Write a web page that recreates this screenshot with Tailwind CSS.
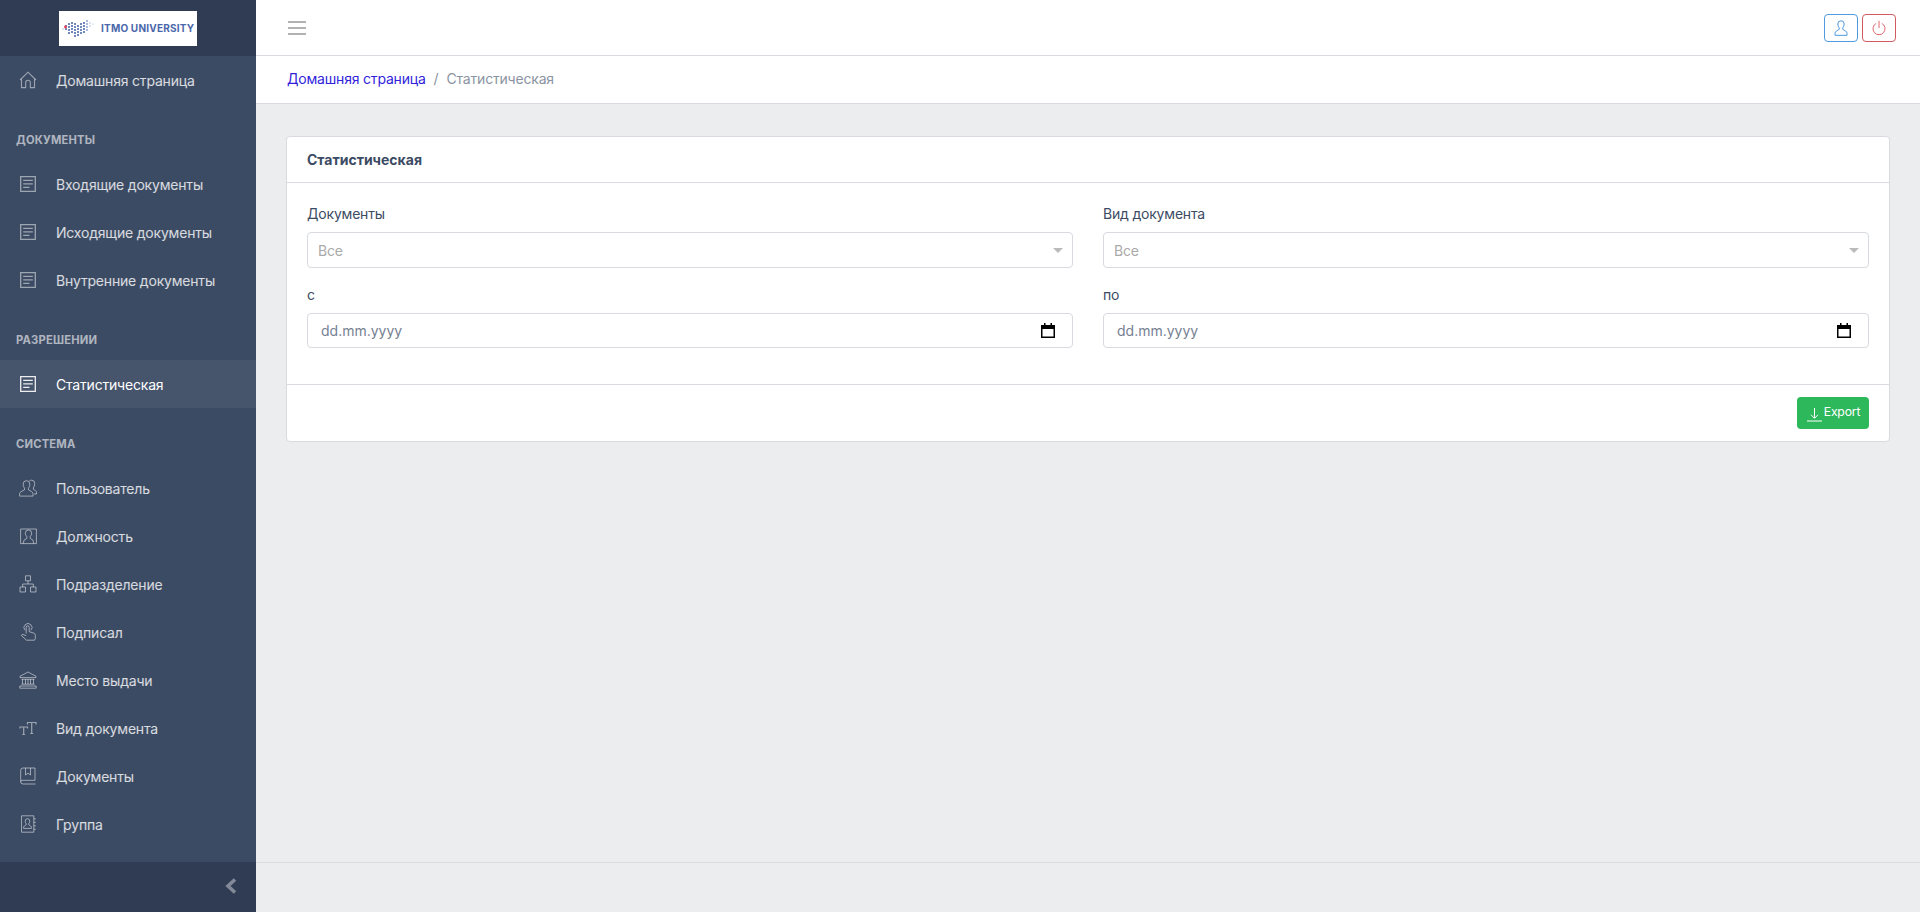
<!DOCTYPE html>
<html lang="ru">
<head>
<meta charset="utf-8">
<title>Статистическая</title>
<script src="https://cdn.jsdelivr.net/npm/@tailwindcss/browser@4"></script>
</head>
<body class="m-0 h-[912px] overflow-hidden bg-[#ebedef] font-[Inter,sans-serif] text-[14px] tracking-[-0.19px] text-[#3c4b64]">
<div class="flex h-[912px]">
  <aside class="flex h-full w-[256px] shrink-0 flex-col bg-[#3c4b64] text-white/80">
    <div class="flex h-[56px] shrink-0 items-center justify-center bg-[#303c54]">
      <div class="flex h-[35px] w-[138px] items-center gap-[5px] bg-white pl-[1px]">
        <svg width="36" height="20" viewBox="0 0 36 20" class="shrink-0">
          <g fill="#3f62a8">
            <circle cx="6" cy="8" r="1"/><circle cx="6" cy="11" r="1"/>
            <circle cx="9" cy="6" r="1"/><circle cx="9" cy="9" r="1"/><circle cx="9" cy="12" r="1"/><circle cx="9" cy="15" r="1"/>
            <circle cx="12" cy="5" r="1"/><circle cx="12" cy="8" r="1"/><circle cx="12" cy="11" r="1"/><circle cx="12" cy="14" r="1"/>
            <circle cx="15" cy="6" r="1"/><circle cx="15" cy="9" r="1"/><circle cx="15" cy="12" r="1"/><circle cx="15" cy="15" r="1"/><circle cx="15" cy="18" r="1"/>
            <circle cx="18" cy="8" r="1"/><circle cx="18" cy="11" r="1"/><circle cx="18" cy="14" r="1"/><circle cx="18" cy="17" r="1"/>
            <circle cx="21" cy="6" r="1"/><circle cx="21" cy="9" r="1"/><circle cx="21" cy="12" r="1"/><circle cx="21" cy="15" r="1"/>
            <circle cx="24" cy="5" r="1"/><circle cx="24" cy="8" r="1"/><circle cx="24" cy="11" r="1"/><circle cx="24" cy="14" r="1"/>
            <circle cx="27" cy="3" r=".8"/><circle cx="27" cy="6" r=".8"/><circle cx="27" cy="9" r=".8"/><circle cx="27" cy="12" r=".8"/>
            <circle cx="30" cy="5" r=".7" fill="#9db8d8"/><circle cx="30" cy="8" r=".7" fill="#9db8d8"/><circle cx="33" cy="6" r=".6" fill="#9db8d8"/>
            <circle cx="3" cy="11" r=".7" fill="#9db8d8"/>
          </g>
          <circle cx="5.500" cy="9" r="1.400" fill="#e8394f"/>
        </svg>
        <span class="whitespace-nowrap text-[10px] leading-none font-bold tracking-[.2px] text-[#4a67ab]">ITMO UNIVERSITY</span>
      </div>
    </div>
    <nav class="flex-1 overflow-hidden">
      <a class="flex h-[48px] items-center"><span class="flex w-[56px] shrink-0 justify-center text-white/50"><svg width="18" height="18" viewBox="0 0 18 18" fill="none" stroke="currentColor" stroke-width="1.100"><path d="M1 9 9 1.200 17 9M2.500 8v8.600h4.200v-5a2.300 2.300 0 0 1 4.600 0v5h4.200V8"/></svg></span>Домашняя страница</a>

      <div class="flex h-[56px] items-center pt-[16px] pl-[16px] text-[11.200px] font-bold tracking-[.2px] uppercase text-white/60">Документы</div>
      <a class="flex h-[48px] items-center"><span class="flex w-[56px] shrink-0 justify-center text-white/50"><svg width="16" height="16" viewBox="0 0 16 16" fill="none" stroke="currentColor" stroke-width="1.300"><path d="M.7 .7h14.600v14.600H.7zM3.200 4.300h9.600M3.200 7.800h9.600M3.200 11.300h6.300"/></svg></span>Входящие документы</a>
      <a class="flex h-[48px] items-center"><span class="flex w-[56px] shrink-0 justify-center text-white/50"><svg width="16" height="16" viewBox="0 0 16 16" fill="none" stroke="currentColor" stroke-width="1.300"><path d="M.7 .7h14.600v14.600H.7zM3.200 4.300h9.600M3.200 7.800h9.600M3.200 11.300h6.300"/></svg></span>Исходящие документы</a>
      <a class="flex h-[48px] items-center"><span class="flex w-[56px] shrink-0 justify-center text-white/50"><svg width="16" height="16" viewBox="0 0 16 16" fill="none" stroke="currentColor" stroke-width="1.300"><path d="M.7 .7h14.600v14.600H.7zM3.200 4.300h9.600M3.200 7.800h9.600M3.200 11.300h6.300"/></svg></span>Внутренние документы</a>

      <div class="flex h-[56px] items-center pt-[16px] pl-[16px] text-[11.200px] font-bold tracking-[.2px] uppercase text-white/60">Разрешении</div>
      <a class="flex h-[48px] items-center bg-white/5 text-white"><span class="flex w-[56px] shrink-0 justify-center text-white/90"><svg width="16" height="16" viewBox="0 0 16 16" fill="none" stroke="currentColor" stroke-width="1.300"><path d="M.7 .7h14.600v14.600H.7zM3.200 4.300h9.600M3.200 7.800h9.600M3.200 11.300h6.300"/></svg></span>Статистическая</a>

      <div class="flex h-[56px] items-center pt-[16px] pl-[16px] text-[11.200px] font-bold tracking-[.2px] uppercase text-white/60">Система</div>
      <a class="flex h-[48px] items-center"><span class="flex w-[56px] shrink-0 justify-center text-white/50"><svg width="18" height="18" viewBox="0 0 18 18" fill="none" stroke="currentColor" stroke-width="1"><path d="M4.200 5a3.300 3.300 0 0 1 6.600 0c0 2-.8 3.300-1.300 4.300v1.500l3.300 2c1 .6 1.200 1.500 1.200 2.300v2H.6v-2c0-.8.300-1.700 1.200-2.300l3.700-2V9.300C5 8.300 4.200 7 4.200 5zM10.500 1.900c.5-.4 1.200-.7 2-.7a3.200 3.200 0 0 1 3.200 3.300c0 2-.8 3.300-1.300 4.300v1.500l2 1.200c.8.500 1.100 1.400 1.100 2.200v1.300h-2.500"/></svg></span>Пользователь</a>
      <a class="flex h-[48px] items-center"><span class="flex w-[56px] shrink-0 justify-center text-white/50"><svg width="17" height="17" viewBox="0 0 17 17" fill="none" stroke="currentColor" stroke-width="1"><path d="M.6 1h15.800v14.600H.6zM3.200 15.500l.8-3.300 2.800-1.800V8.600C6.200 7.800 5.300 6.600 5.300 5.200a3.200 3.200 0 0 1 6.400 0c0 1.400-.9 2.600-1.500 3.400v1.800l2.800 1.800.8 3.300"/></svg></span>Должность</a>
      <a class="flex h-[48px] items-center"><span class="flex w-[56px] shrink-0 justify-center text-white/50"><svg width="18" height="18" viewBox="0 0 18 18" fill="none" stroke="currentColor" stroke-width="1"><path d="M6.500.8h5v5h-5zM1 12h5.500v5H1zM11.500 12H17v5h-5.500zM9 5.800v3.200M3.700 12V9h10.600v3"/></svg></span>Подразделение</a>
      <a class="flex h-[48px] items-center"><span class="flex w-[56px] shrink-0 justify-center text-white/50"><svg width="18" height="18" viewBox="0 0 18 18" fill="none" stroke="currentColor" stroke-width="1"><path d="M6 7.200a4 4 0 1 1 6 0M7.200 10.500V4.300a1.500 1.500 0 0 1 3 0v4.400l4.300 1.300c1.200.4 1.800 1.100 1.800 2.200v3.400l-.8 1.600H7.500L2.300 12.500l1-1.200 3.900 1.300"/></svg></span>Подписал</a>
      <a class="flex h-[48px] items-center"><span class="flex w-[56px] shrink-0 justify-center text-white/50"><svg width="18" height="18" viewBox="0 0 18 18" fill="none" stroke="currentColor" stroke-width="1"><path d="M1 5.300 9 1l8 4.300v1.300H1zM2.500 8.300h13M3.500 8.300V13M6.500 8.300V13M9 8.300V13M11.500 8.300V13M14.500 8.300V13M2.500 13.200h13M.8 15h16.400v2.200H.8z"/></svg></span>Место выдачи</a>
      <a class="flex h-[48px] items-center"><span class="flex w-[56px] shrink-0 justify-center text-white/50"><svg width="18" height="18" viewBox="0 0 18 18" fill="none" stroke="currentColor" stroke-width="1.200"><path d="M1 9.500V8h7.500v1.500M4.700 8v7.500M3.300 15.500h2.800M8.500 5.500V3.500h8.500v2M12.700 3.500v11M11.200 14.500h3"/></svg></span>Вид документа</a>
      <a class="flex h-[48px] items-center"><span class="flex w-[56px] shrink-0 justify-center text-white/50"><svg width="16" height="18" viewBox="0 0 16 18" fill="none" stroke="currentColor" stroke-width="1"><path d="M15 1H3a2.300 2.300 0 0 0-2.300 2.300v11.400A2.300 2.300 0 0 0 3 17h12.500M15 1v12.300H3a2 2 0 0 0-2.300 1.500M5.500 1v7l2.500-1.800L10.500 8V1"/></svg></span>Документы</a>
      <a class="flex h-[48px] items-center"><span class="flex w-[56px] shrink-0 justify-center text-white/50"><svg width="16" height="18" viewBox="0 0 16 18" fill="none" stroke="currentColor" stroke-width="1"><path d="M1.500.8h12.300v16.400H1.500zM13.800 3.800h2M13.800 7.300h2M13.800 10.800h2M13.800 14.300h2M5.200 6a2.300 2.300 0 0 1 4.600 0c0 1.300-.6 2-1 2.800v1l1.800 1.200c.5.400.8.800.8 1.400v1H3.600v-1c0-.6.300-1 .8-1.400l1.800-1.200v-1C5.800 8 5.200 7.300 5.200 6z"/></svg></span>Группа</a>
    </nav>
    <div class="flex h-[50px] shrink-0 items-center justify-end bg-[#303c54] pr-[19px] pb-[2px] text-white/40">
      <svg width="12" height="16" viewBox="0 0 12 16" fill="none" stroke="currentColor" stroke-width="3.600"><path d="M10 1.500 3 8l7 6.500"/></svg>
    </div>
  </aside>

  <div class="flex min-w-0 flex-1 flex-col">
    <header class="flex h-[56px] shrink-0 items-center justify-between border-b border-[#d8dbe0] bg-white pr-[24px] pl-[32px]">
      <svg width="18" height="16" viewBox="0 0 18 16" stroke="#666" stroke-width="1.200"><path d="M0 2h18M0 8h18M0 14h18"/></svg>
      <div class="flex gap-[4px]">
        <button class="flex h-[28px] w-[34px] items-center justify-center rounded-[4px] border border-[#4f9ae0] text-[#4f9ae0]"><svg width="14" height="16" viewBox="0 0 14 16" fill="none" stroke="currentColor" stroke-width="1"><path d="M3.800 4a3.200 3.200 0 0 1 6.400 0c0 1.700-.8 3-1.400 3.900v1.500l2.900 1.700c.8.500 1.300 1.300 1.300 2.200v2H1v-2c0-.9.500-1.700 1.300-2.200l2.900-1.700V7.900C4.600 7 3.800 5.700 3.800 4z"/></svg></button>
        <button class="flex h-[28px] w-[34px] items-center justify-center rounded-[4px] border border-[#d05a5f] text-[#e0686e]"><svg width="14" height="16" viewBox="0 0 14 16" fill="none" stroke="currentColor" stroke-width="1"><path d="M7 .8v7.200M4.200 3.400a6 6 0 1 0 5.600 0"/></svg></button>
      </div>
    </header>
    <div class="flex h-[48px] shrink-0 items-center border-b border-[#d8dbe0] bg-white pb-[2px] pl-[31px]">
      <a class="text-[#321fdb]">Домашняя страница</a><span class="px-[8px] text-[#8a93a2]">/</span><span class="text-[#8a93a2]">Статистическая</span>
    </div>
    <main class="flex-1 pt-[32px] pr-[30px] pl-[30px]">
      <section class="rounded-[4px] border border-[#d8dbe0] bg-white">
        <div class="flex h-[46px] items-center border-b border-[#d8dbe0] px-[20px] font-bold tracking-normal">Статистическая</div>
        <div class="grid h-[201px] grid-cols-2 content-start gap-x-[30px] px-[20px] pt-[20px]">
          <div>
            <label class="block h-[29px] leading-[22px]">Документы</label>
            <div class="flex h-[36px] items-center justify-between rounded-[4px] border border-[#d8dbe0] pr-[9px] pl-[10px] text-[#aaa]">Все<span class="h-0 w-0 border-x-[5px] border-t-[5px] border-x-transparent border-t-[#bbb]"></span></div>
          </div>
          <div>
            <label class="block h-[29px] leading-[22px]">Вид документа</label>
            <div class="flex h-[36px] items-center justify-between rounded-[4px] border border-[#d8dbe0] pr-[9px] pl-[10px] text-[#aaa]">Все<span class="h-0 w-0 border-x-[5px] border-t-[5px] border-x-transparent border-t-[#bbb]"></span></div>
          </div>
          <div class="pt-[16px]">
            <label class="block h-[29px] leading-[22px]">с</label>
            <div class="flex h-[35px] items-center justify-between rounded-[4px] border border-[#d8dbe0] pr-[17px] pl-[13px] tracking-normal text-[#768192]">dd.mm.yyyy<svg width="14" height="15" viewBox="0 0 14 15"><path fill="#000" d="M0 2h3V0h1.500v2h5V0H11v2h3v13H0zm1.500 4v7.500h11V6z"/></svg></div>
          </div>
          <div class="pt-[16px]">
            <label class="block h-[29px] leading-[22px]">по</label>
            <div class="flex h-[35px] items-center justify-between rounded-[4px] border border-[#d8dbe0] pr-[17px] pl-[13px] tracking-normal text-[#768192]">dd.mm.yyyy<svg width="14" height="15" viewBox="0 0 14 15"><path fill="#000" d="M0 2h3V0h1.500v2h5V0H11v2h3v13H0zm1.500 4v7.500h11V6z"/></svg></div>
          </div>
        </div>
        <div class="flex h-[57px] items-center justify-end border-t border-[#d8dbe0] px-[20px]">
          <button class="flex h-[32px] w-[72px] items-center justify-center gap-[1px] rounded-[4px] bg-[#2eb85c] pb-[1px] text-[12.250px] text-white"><svg width="17" height="17" viewBox="0 0 17 17" fill="none" stroke="currentColor" stroke-width="1" class="mt-[2px]"><path d="M8.500 3v10M5 9.800l3.500 3.500 3.500-3.500M1 16h15"/></svg>Export</button>
        </div>
      </section>
    </main>
    <footer class="h-[50px] shrink-0 border-t border-[#d8dbe0] bg-[#ebedef]"></footer>
  </div>
</div>
</body>
</html>
